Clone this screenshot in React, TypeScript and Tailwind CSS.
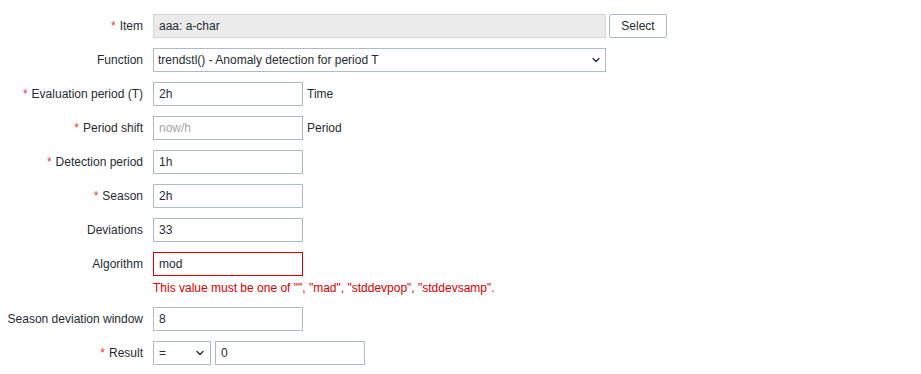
import { ChevronDown } from "lucide-react";

const font = { fontFamily: '"Liberation Sans", Arial, sans-serif' };

function Label({ text, required }: { text: string; required?: boolean }) {
  return (
    <div className="w-[143px] shrink-0 text-right leading-6 text-[#1f2c33]">
      {required && <span className="text-[#e33734] mr-[4px]">*</span>}
      {text}
    </div>
  );
}

function TextBox({ value, placeholder, error }: { value?: string; placeholder?: string; error?: boolean }) {
  return (
    <div
      className={`w-[150px] h-6 border px-[5px] leading-[22px] bg-white ${
        error ? "border-[#d40000]" : "border-[#acbbc2]"
      } ${value ? "text-[#1f2c33]" : "text-[#a5a5a5]"}`}
    >
      {value || placeholder}
    </div>
  );
}

function Row({ label, required, children }: { label: string; required?: boolean; children: React.ReactNode }) {
  return (
    <div className="flex gap-[10px] items-start">
      <Label text={label} required={required} />
      <div className="flex flex-col">{children}</div>
    </div>
  );
}

export default function App() {
  return (
    <div className="w-[921px] h-[374px] bg-white text-[12px] pt-[14px] flex flex-col gap-[10px]" style={font}>
      <Row label="Item" required>
        <div className="flex gap-[3px]">
          <div className="w-[453px] h-6 border border-[#d0d7db] bg-[#ebebeb] px-[5px] leading-[22px] text-[#1f2c33]">
            aaa: a-char
          </div>
          <button className="w-[58px] h-6 border border-[#acbbc2] rounded-[2px] bg-white text-[#1f2c33] leading-[22px]">
            Select
          </button>
        </div>
      </Row>

      <Row label="Function">
        <div className="w-[453px] h-6 border border-[#acbbc2] bg-white pl-[4px] pr-[3px] flex items-center justify-between text-[#1f2c33]">
          <span>trendstl() - Anomaly detection for period T</span>
          <ChevronDown size={12} strokeWidth={2.5} className="text-[#1f2c33]" />
        </div>
      </Row>

      <Row label="Evaluation period (T)" required>
        <div className="flex items-center">
          <TextBox value="2h" />
          <span className="ml-[4px] text-[#1f2c33]">Time</span>
        </div>
      </Row>

      <Row label="Period shift" required>
        <div className="flex items-center">
          <TextBox placeholder="now/h" />
          <span className="ml-[4px] text-[#1f2c33]">Period</span>
        </div>
      </Row>

      <Row label="Detection period" required>
        <TextBox value="1h" />
      </Row>

      <Row label="Season" required>
        <TextBox value="2h" />
      </Row>

      <Row label="Deviations">
        <TextBox value="33" />
      </Row>

      <Row label="Algorithm">
        <TextBox value="mod" error />
        <div className="mt-[4px] leading-[17px] text-[#d40000]">
          This value must be one of "", "mad", "stddevpop", "stddevsamp".
        </div>
      </Row>

      <Row label="Season deviation window">
        <TextBox value="8" />
      </Row>

      <Row label="Result" required>
        <div className="flex gap-[4px]">
          <div className="w-[58px] h-6 border border-[#acbbc2] bg-white pl-[5px] pr-[4px] flex items-center justify-between text-[#1f2c33]">
            <span>=</span>
            <ChevronDown size={12} strokeWidth={2.5} className="text-[#1f2c33]" />
          </div>
          <TextBox value="0" />
        </div>
      </Row>
    </div>
  );
}
